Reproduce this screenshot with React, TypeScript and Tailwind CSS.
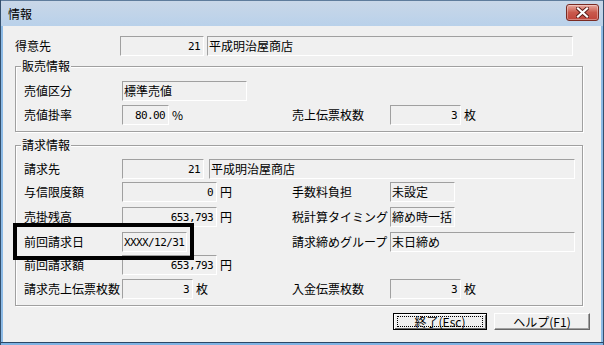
const font = 'font-["Noto_Sans_CJK_JP","Liberation_Sans",sans-serif]'

function Field({ w, value, right, mono }: { w: string; value?: string; right?: boolean; mono?: boolean }) {
  return (
    <div
      className={`${w} h-[20px] shrink-0 flex items-center border border-t-[#a0a0a0] border-l-[#a0a0a0] border-b-white border-r-white bg-[#f0f0f0] leading-none text-black whitespace-nowrap overflow-hidden ${
        right ? 'justify-end pr-[3px]' : 'pl-[1px]'
      } ${mono ? 'font-["DejaVu_Sans_Mono","Liberation_Mono",monospace] text-[11px] tracking-[-0.6px]' : 'text-[12px]'}`}
    >
      {value}
    </div>
  )
}

function Label({ text, w }: { text: string; w: string }) {
  return <div className={`${w} shrink-0 text-[12px] leading-none text-black whitespace-nowrap`}>{text}</div>
}

function Unit({ text }: { text: string }) {
  return <span className="ml-[3px] text-[12px] leading-none text-black">{text}</span>
}

function Group({ title, h, className, children }: { title: string; h: string; className: string; children: React.ReactNode }) {
  return (
    <div
      className={`relative w-[568px] ${h} ${className} border border-[#a0a0a0] shadow-[inset_1px_1px_0_#ffffff,1px_1px_0_#ffffff] pl-[8px]`}
    >
      <span className="absolute -top-[8px] left-[5px] bg-[#f0f0f0] px-[1px] text-[12px] leading-[14px] text-black">
        {title}
      </span>
      {children}
    </div>
  )
}

export default function App() {
  return (
    <div className={`relative w-[604px] h-[345px] overflow-hidden flex flex-col bg-[#8dbbe6] border-x border-[#34506e] ${font}`}>
      {/* title bar */}
      <div className="h-[26px] shrink-0 -mx-px flex items-center justify-between border-t border-[#5f7c9c] bg-gradient-to-b from-[#c9d7e8] to-[#b9d1ea] pl-[8px] pr-[5px]">
        <span className="text-[12px] leading-none text-black">情報</span>
        <div className="w-[33px] h-[17px] -mt-[3px] flex items-center justify-center rounded-[3px] border border-[#7a2a22] bg-gradient-to-b from-[#e7a89f] via-[#c9594c] to-[#c0443a] shadow-[inset_0_0_0_1px_rgba(255,255,255,0.35)]">
          <svg width="13" height="11" viewBox="0 0 13 11">
            <path d="M2 1.5 L11 9.5 M11 1.5 L2 9.5" stroke="#5a1d18" strokeWidth="4" strokeLinecap="square" />
            <path d="M2 1.5 L11 9.5 M11 1.5 L2 9.5" stroke="#ffffff" strokeWidth="2.2" strokeLinecap="square" />
          </svg>
        </div>
      </div>

      {/* body */}
      <div className="flex-1 mx-[2px] bg-[#f0f0f0] pl-[12px] flex flex-col">
        <div className="mt-[10px] flex items-center">
          <Label text="得意先" w="w-[105px]" />
          <Field w="w-[84px]" value="21" right mono />
          <div className="w-[3px]" />
          <Field w="w-[366px]" value="平成明治屋商店" />
        </div>

        <Group title="販売情報" h="h-[66px]" className="mt-[10px]">
          <div className="mt-[14px] flex items-center">
            <Label text="売値区分" w="w-[98px]" />
            <Field w="w-[125px]" value="標準売値" />
          </div>
          <div className="mt-[4px] flex items-center">
            <div className="w-[268px] flex items-center">
              <Label text="売値掛率" w="w-[98px]" />
              <Field w="w-[47px]" value="80.00" right mono />
              <Unit text="%" />
            </div>
            <Label text="売上伝票枚数" w="w-[98px]" />
            <Field w="w-[71px]" value="3" right mono />
            <Unit text="枚" />
          </div>
        </Group>

        <Group title="請求情報" h="h-[161px]" className="mt-[13px]">
          <div className="mt-[13px] flex items-center">
            <Label text="請求先" w="w-[98px]" />
            <Field w="w-[82px]" value="21" right mono />
            <div className="w-[5px]" />
            <Field w="w-[366px]" value="平成明治屋商店" />
          </div>
          <div className="mt-[3px] flex items-center">
            <div className="w-[268px] flex items-center">
              <Label text="与信限度額" w="w-[98px]" />
              <Field w="w-[95px]" value="0" right mono />
              <Unit text="円" />
            </div>
            <Label text="手数料負担" w="w-[98px]" />
            <Field w="w-[65px]" value="未設定" />
          </div>
          <div className="mt-[5px] flex items-center">
            <div className="w-[268px] flex items-center">
              <Label text="売掛残高" w="w-[98px]" />
              <Field w="w-[95px]" value="653,793" right mono />
              <Unit text="円" />
            </div>
            <Label text="税計算タイミング" w="w-[98px]" />
            <Field w="w-[65px]" value="締め時一括" />
          </div>
          <div className="mt-[5px] flex items-center">
            <div className="w-[268px] flex items-center">
              <Label text="前回請求日" w="w-[98px]" />
              <Field w="w-[65px]" value="XXXX/12/31" mono />
            </div>
            <Label text="請求締めグループ" w="w-[98px]" />
            <Field w="w-[185px]" value="末日締め" />
          </div>
          <div className="mt-[3px] flex items-center">
            <div className="w-[268px] flex items-center">
              <Label text="前回請求額" w="w-[98px]" />
              <Field w="w-[95px]" value="653,793" right mono />
              <Unit text="円" />
            </div>
          </div>
          <div className="mt-[4px] flex items-center">
            <div className="w-[268px] flex items-center">
              <Label text="請求売上伝票枚数" w="w-[98px]" />
              <Field w="w-[71px]" value="3" right mono />
              <Unit text="枚" />
            </div>
            <Label text="入金伝票枚数" w="w-[98px]" />
            <Field w="w-[71px]" value="3" right mono />
            <Unit text="枚" />
          </div>
        </Group>

        <div className="mt-[7px] flex justify-end gap-[7px] pr-[11px]">
          <button className="w-[94px] h-[17px] border border-[#000000] bg-[#f0f0f0] p-0 shadow-[inset_1px_1px_0_#ffffff,inset_-1px_-1px_0_#696969]">
            <div className="mx-[3px] h-[11px] flex items-center justify-center border border-dotted border-black text-[12px] leading-none text-black">
              終了(Esc)
            </div>
          </button>
          <button className="w-[96px] h-[17px] border border-t-white border-l-white border-b-[#696969] border-r-[#696969] bg-[#f0f0f0] p-0 shadow-[inset_-1px_-1px_0_#a0a0a0] text-[12px] leading-none text-black">
            ヘルプ(F1)
          </button>
        </div>
      </div>
      <div className="h-[3px] shrink-0 border-t border-[#2b4766] bg-[#7fb3e3]" />

      {/* highlight box */}
      <div className="absolute left-[12px] top-[223px] w-[181px] h-[37px] border-[4px] border-black pointer-events-none" />
    </div>
  )
}
